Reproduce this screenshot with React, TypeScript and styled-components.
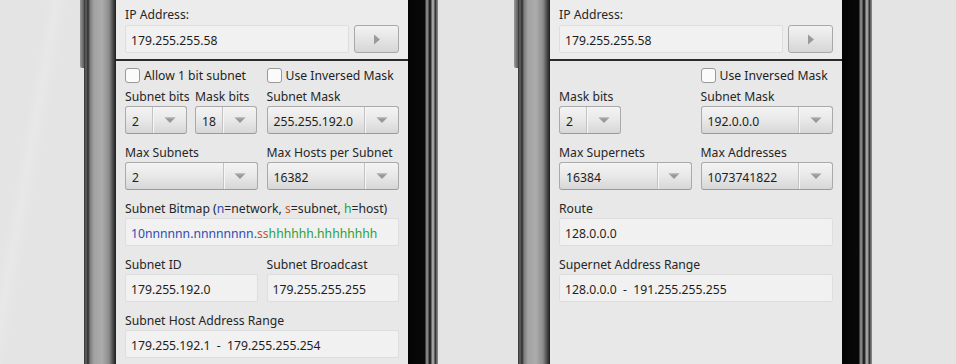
import styled, { createGlobalStyle } from 'styled-components';

const GlobalStyle = createGlobalStyle`
  html, body {
    margin: 0;
    padding: 0;
  }
  body {
    width: 956px;
    height: 364px;
    overflow: hidden;
    background: #e5e5e5;
    font-family: "Noto Sans", "DejaVu Sans", sans-serif;
  }
`;

const Stage = styled.div`
  display: flex;
  gap: 76px;
  padding-left: 80px;
  height: 364px;
  background: linear-gradient(100deg, #e4e4e4 0, #e4e4e4 46px, #e8e8e8 56px, #e4e4e4 68px, #e4e4e4 100%);
`;

const Phone = styled.div`
  display: flex;
  height: 364px;
`;

const SideKey = styled.div`
  width: 4px;
  height: 68px;
  background: linear-gradient(to right, #9a9a9a, #5c5c5c);
  border-bottom-left-radius: 2px;
`;

const LeftBezel = styled.div`
  width: 32px;
  background: linear-gradient(
    to right,
    #2e2e2e 0,
    #666 2px,
    #2a2a2a 4px,
    #7c7c7c 6px,
    #a2a2a2 10px,
    #acacac 18px,
    #8c8c8c 25px,
    #4a4a4a 29px,
    #1c1c1c 32px
  );
`;

const RightBezel = styled.div`
  width: 30px;
  background: linear-gradient(
    to right,
    #040404 0,
    #090909 17px,
    #7a7a7a 18px,
    #8a8a8a 20px,
    #1e1e1e 21px,
    #2a2a2a 23px,
    #a6a6a6 24px,
    #999 26px,
    #2e2e2e 27px,
    #3a3a3a 28px,
    #8c8c8c 29px,
    #777 30px
  );
`;

const Screen = styled.div`
  width: 292px;
  display: flex;
  flex-direction: column;
  background: #e8e8e8;
  color: #262626;
  font-size: 12.2px;
`;

const AddressBar = styled.div`
  display: flex;
  flex-direction: column;
  gap: 1px;
  padding: 6px 9px;
  background: #ececec;
  border-bottom: 2px solid #2a2a2a;
`;

const Label = styled.div`
  height: 18px;
  line-height: 18px;
  white-space: nowrap;
`;

const InputRow = styled.div`
  display: flex;
  gap: 5px;
`;

const Field = styled.div<{ $grow?: boolean }>`
  box-sizing: border-box;
  height: 28px;
  flex: ${(p) => (p.$grow ? 1 : 'none')};
  display: flex;
  align-items: center;
  padding: 2px 0 0 5px;
  background: #f1f1f1;
  border: 1px solid #dedede;
  border-radius: 2px;
  color: #1e1e1e;
  white-space: nowrap;
`;

const GoButton = styled.div`
  box-sizing: border-box;
  width: 45px;
  height: 28px;
  display: flex;
  align-items: center;
  justify-content: center;
  background: linear-gradient(to bottom, #f3f3f3, #d6d6d6);
  border: 1px solid #a8a8a8;
  border-radius: 3px;
`;

const Form = styled.div`
  display: flex;
  flex-direction: column;
  gap: 4px;
  padding: 5px 9px;
`;

const CheckRow = styled.div`
  display: grid;
  grid-template-columns: 1fr 1fr;
  column-gap: 9px;
  height: 18px;
`;

const Check = styled.label`
  display: flex;
  align-items: center;
  gap: 4px;
  color: #1e1e1e;
  white-space: nowrap;
`;

const Box = styled.span`
  box-sizing: border-box;
  width: 15px;
  height: 15px;
  background: #fbfbfb;
  border: 1px solid #999;
  border-radius: 3px;
`;

const Grid = styled.div`
  display: grid;
  grid-template-columns: 1fr 1fr;
  column-gap: 9px;
  row-gap: 10px;
`;

const Split = styled.div`
  display: grid;
  grid-template-columns: 62px 62px;
  column-gap: 8px;
`;

const Block = styled.div<{ $wide?: boolean }>`
  display: flex;
  flex-direction: column;
  grid-column: ${(p) => (p.$wide ? '1 / -1' : 'auto')};
`;

const Spinner = styled.div`
  box-sizing: border-box;
  height: 28px;
  display: flex;
  background: linear-gradient(to bottom, #f4f4f4 0, #e8e8e8 50%, #d7d7d7 100%);
  border: 1px solid #aaa;
  border-bottom-color: #9a9a9a;
  border-radius: 3px;
  color: #1e1e1e;
`;

const SpinValue = styled.div`
  flex: 1;
  display: flex;
  align-items: center;
  padding: 3px 0 0 6px;
  white-space: nowrap;
`;

const SpinArrow = styled.div`
  width: 33px;
  display: flex;
  align-items: center;
  justify-content: center;
  border-left: 1px solid #c3c3c3;
  box-shadow: inset 1px 0 0 #f6f6f6;
`;

const Net = styled.span`
  color: #2c4db3;
`;
const Sub = styled.span`
  color: #c9541d;
`;
const Host = styled.span`
  color: #2ba03a;
`;

const Play = () => (
  <svg width="8" height="11" viewBox="0 0 8 11">
    <path d="M1 0.5 L7 5.5 L1 10.5 Z" fill="#9a9a9a" />
  </svg>
);

const Down = () => (
  <svg width="12" height="7" viewBox="0 0 12 7">
    <path d="M0.5 0.5 L11.5 0.5 L6 6 Z" fill="#999" />
    <path d="M2 1.2 L10 1.2" stroke="#b3b3b3" strokeWidth="0.8" />
  </svg>
);

const Select = ({ value }: { value: string }) => (
  <Spinner>
    <SpinValue>{value}</SpinValue>
    <SpinArrow>
      <Down />
    </SpinArrow>
  </Spinner>
);

const Header = () => (
  <AddressBar>
    <Label>IP Address:</Label>
    <InputRow>
      <Field $grow>179.255.255.58</Field>
      <GoButton>
        <Play />
      </GoButton>
    </InputRow>
  </AddressBar>
);

const Device = ({ children }: { children: React.ReactNode }) => (
  <Phone>
    <SideKey />
    <LeftBezel />
    <Screen>{children}</Screen>
    <RightBezel />
  </Phone>
);

export default function App() {
  return (
    <>
      <GlobalStyle />
      <Stage>
        <Device>
          <Header />
          <Form>
            <CheckRow>
              <Check>
                <Box />
                Allow 1 bit subnet
              </Check>
              <Check>
                <Box />
                Use Inversed Mask
              </Check>
            </CheckRow>
            <Grid>
              <Split>
                <Block>
                  <Label>Subnet bits</Label>
                  <Select value="2" />
                </Block>
                <Block>
                  <Label>Mask bits</Label>
                  <Select value="18" />
                </Block>
              </Split>
              <Block>
                <Label>Subnet Mask</Label>
                <Select value="255.255.192.0" />
              </Block>
              <Block>
                <Label>Max Subnets</Label>
                <Select value="2" />
              </Block>
              <Block>
                <Label>Max Hosts per Subnet</Label>
                <Select value="16382" />
              </Block>
              <Block $wide>
                <Label>
                  Subnet Bitmap (<Net>n</Net>=network, <Sub>s</Sub>=subnet, <Host>h</Host>=host)
                </Label>
                <Field>
                  <Net>10nnnnnn.nnnnnnnn.</Net>
                  <Sub>ss</Sub>
                  <Host>hhhhhh.hhhhhhhh</Host>
                </Field>
              </Block>
              <Block>
                <Label>Subnet ID</Label>
                <Field>179.255.192.0</Field>
              </Block>
              <Block>
                <Label>Subnet Broadcast</Label>
                <Field>179.255.255.255</Field>
              </Block>
              <Block $wide>
                <Label>Subnet Host Address Range</Label>
                <Field>179.255.192.1&nbsp;&nbsp;-&nbsp;&nbsp;179.255.255.254</Field>
              </Block>
            </Grid>
          </Form>
        </Device>
        <Device>
          <Header />
          <Form>
            <CheckRow>
              <span />
              <Check>
                <Box />
                Use Inversed Mask
              </Check>
            </CheckRow>
            <Grid>
              <Split>
                <Block>
                  <Label>Mask bits</Label>
                  <Select value="2" />
                </Block>
              </Split>
              <Block>
                <Label>Subnet Mask</Label>
                <Select value="192.0.0.0" />
              </Block>
              <Block>
                <Label>Max Supernets</Label>
                <Select value="16384" />
              </Block>
              <Block>
                <Label>Max Addresses</Label>
                <Select value="1073741822" />
              </Block>
              <Block $wide>
                <Label>Route</Label>
                <Field>128.0.0.0</Field>
              </Block>
              <Block $wide>
                <Label>Supernet Address Range</Label>
                <Field>128.0.0.0&nbsp;&nbsp;-&nbsp;&nbsp;191.255.255.255</Field>
              </Block>
            </Grid>
          </Form>
        </Device>
      </Stage>
    </>
  );
}
